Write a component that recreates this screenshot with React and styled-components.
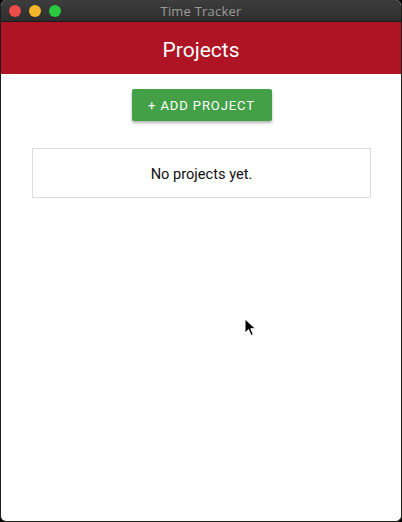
import React from "react";
import styled, { createGlobalStyle } from "styled-components";

const GlobalStyle = createGlobalStyle`
  html, body {
    margin: 0;
    padding: 0;
    background: #000;
  }
  body {
    font-family: Roboto, "Liberation Sans", sans-serif;
  }
`;

function App() {
  return (
    <>
      <GlobalStyle />
      <Window>
        <TitleBar>
          <Lights>
            <Light color="#ee4b4b" />
            <Light color="#f6b62b" />
            <Light color="#2ac940" />
          </Lights>
          <WindowTitle>Time Tracker</WindowTitle>
        </TitleBar>
        <Header>Projects</Header>
        <Content>
          <AddButton>+ ADD PROJECT</AddButton>
          <EmptyCard>No projects yet.</EmptyCard>
          <Cursor width="14" height="20" viewBox="0 0 14 20">
            <path
              d="M1 1 L1 15 L4.5 11.5 L7 17.5 L9.3 16.5 L6.8 10.7 L11.5 10.7 Z"
              fill="#000"
              stroke="#fff"
              strokeWidth="1"
              strokeLinejoin="round"
            />
          </Cursor>
        </Content>
      </Window>
    </>
  );
}

const Window = styled.div`
  width: 402px;
  height: 522px;
  box-sizing: border-box;
  display: flex;
  flex-direction: column;
  background: #fff;
  border: 1px solid #1d1d1b;
  border-top: none;
  border-radius: 6px;
  overflow: hidden;
`;

const TitleBar = styled.div`
  height: 22px;
  flex-shrink: 0;
  position: relative;
  display: flex;
  align-items: center;
  justify-content: center;
  background: linear-gradient(#3d3d3d, #2e2e2e);
  border-bottom: 1px solid #1a1a1a;
  box-sizing: border-box;
`;

const Lights = styled.div`
  position: absolute;
  left: 8px;
  top: 5px;
  display: flex;
  gap: 8px;
`;

const Light = styled.span`
  width: 12px;
  height: 12px;
  border-radius: 50%;
  background: ${(p) => p.color};
`;

const WindowTitle = styled.div`
  color: #9b9b9b;
  font-size: 13px;
  font-family: "Open Sans", "Liberation Sans", sans-serif;
  letter-spacing: 0.2px;
`;

const Header = styled.div`
  height: 52px;
  flex-shrink: 0;
  background: #ae1423;
  color: #fff;
  font-size: 21px;
  display: flex;
  align-items: center;
  justify-content: center;
  padding-top: 3px;
  box-sizing: border-box;
`;

const Content = styled.div`
  flex: 1;
  position: relative;
  display: flex;
  flex-direction: column;
  align-items: center;
  padding: 15px 30px 0 31px;
`;

const AddButton = styled.button`
  width: 140px;
  height: 32px;
  border: none;
  border-radius: 2px;
  background: #43a047;
  color: #fff;
  font-family: Roboto, "Liberation Sans", sans-serif;
  font-size: 13px;
  font-weight: 400;
  letter-spacing: 0.9px;
  padding-top: 1px;
  box-shadow: 0 2px 3px rgba(0, 0, 0, 0.3);
  cursor: pointer;
`;

const EmptyCard = styled.div`
  align-self: stretch;
  margin-top: 27px;
  height: 50px;
  box-sizing: border-box;
  border: 1px solid #dcdcdc;
  display: flex;
  align-items: center;
  justify-content: center;
  padding-top: 2px;
  font-size: 14.6px;
  color: #111;
`;

const Cursor = styled.svg`
  position: absolute;
  left: 243px;
  top: 244px;
`;

export default App;
